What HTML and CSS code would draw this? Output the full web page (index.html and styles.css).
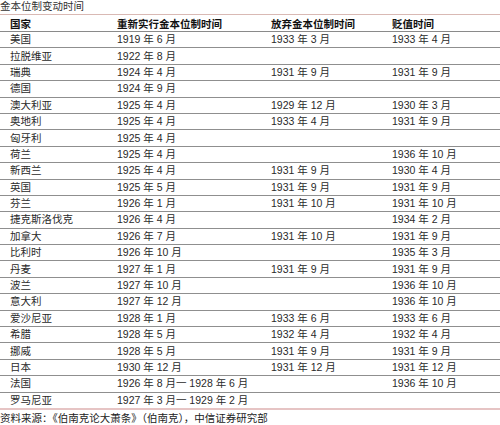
FILE: index.html
```html
<!DOCTYPE html>
<html>
<head>
<meta charset="utf-8">
<link rel="stylesheet" href="styles.css">
</head>
<body>
<div class="title">金本位制变动时间</div>
<table class="gold">
<colgroup><col class="c1"><col class="c2"><col class="c3"><col class="c4"></colgroup>
<thead>
<tr><th>国家</th><th>重新实行金本位制时间</th><th>放弃金本位制时间</th><th>贬值时间</th></tr>
</thead>
<tbody>
<tr><td>美国</td><td>1919 年 6 月</td><td>1933 年 3 月</td><td>1933 年 4 月</td></tr>
<tr><td>拉脱维亚</td><td>1922 年 8 月</td><td></td><td></td></tr>
<tr><td>瑞典</td><td>1924 年 4 月</td><td>1931 年 9 月</td><td>1931 年 9 月</td></tr>
<tr><td>德国</td><td>1924 年 9 月</td><td></td><td></td></tr>
<tr><td>澳大利亚</td><td>1925 年 4 月</td><td>1929 年 12 月</td><td>1930 年 3 月</td></tr>
<tr><td>奥地利</td><td>1925 年 4 月</td><td>1933 年 4 月</td><td>1931 年 9 月</td></tr>
<tr><td>匈牙利</td><td>1925 年 4 月</td><td></td><td></td></tr>
<tr><td>荷兰</td><td>1925 年 4 月</td><td></td><td>1936 年 10 月</td></tr>
<tr><td>新西兰</td><td>1925 年 4 月</td><td>1931 年 9 月</td><td>1930 年 4 月</td></tr>
<tr><td>英国</td><td>1925 年 5 月</td><td>1931 年 9 月</td><td>1931 年 9 月</td></tr>
<tr><td>芬兰</td><td>1926 年 1 月</td><td>1931 年 10 月</td><td>1931 年 10 月</td></tr>
<tr><td>捷克斯洛伐克</td><td>1926 年 4 月</td><td></td><td>1934 年 2 月</td></tr>
<tr><td>加拿大</td><td>1926 年 7 月</td><td>1931 年 10 月</td><td>1931 年 9 月</td></tr>
<tr><td>比利时</td><td>1926 年 10 月</td><td></td><td>1935 年 3 月</td></tr>
<tr><td>丹麦</td><td>1927 年 1 月</td><td>1931 年 9 月</td><td>1931 年 9 月</td></tr>
<tr><td>波兰</td><td>1927 年 10 月</td><td></td><td>1936 年 10 月</td></tr>
<tr><td>意大利</td><td>1927 年 12 月</td><td></td><td>1936 年 10 月</td></tr>
<tr><td>爱沙尼亚</td><td>1928 年 1 月</td><td>1933 年 6 月</td><td>1933 年 6 月</td></tr>
<tr><td>希腊</td><td>1928 年 5 月</td><td>1932 年 4 月</td><td>1932 年 4 月</td></tr>
<tr><td>挪威</td><td>1928 年 5 月</td><td>1931 年 9 月</td><td>1931 年 9 月</td></tr>
<tr><td>日本</td><td>1930 年 12 月</td><td>1931 年 12 月</td><td>1931 年 12 月</td></tr>
<tr><td>法国</td><td>1926 年 8 月一 1928 年 6 月</td><td></td><td>1936 年 10 月</td></tr>
<tr class="last"><td>罗马尼亚</td><td>1927 年 3 月一 1929 年 2 月</td><td></td><td></td></tr>
</tbody>
</table>
<div class="source">资料来源：《伯南克论大萧条》（伯南克），中信证券研究部</div>
</body>
</html>
```

FILE: styles.css
```css
html, body {
  margin: 0;
  padding: 0;
  background: #ffffff;
}
body {
  width: 500px;
  font-family: "Liberation Sans", "Noto Sans CJK SC", sans-serif;
  font-size: 10.5px;
  color: #2a2a2a;
  overflow: hidden;
}
.title {
  height: 14px;
  line-height: 13px;
  color: #333;
  white-space: nowrap;
}
.gold {
  border-collapse: collapse;
  table-layout: fixed;
  width: 500px;
}
.c1 { width: 107px; }
.c2 { width: 154px; }
.c3 { width: 121px; }
.c4 { width: 118px; }
.gold th,
.gold td {
  padding: 0 0 0 10px;
  text-align: left;
  white-space: nowrap;
  overflow: hidden;
}
.gold th {
  height: 16px;
  font-weight: bold;
  color: #111;
  border-top: 1px solid #d9b9b4;
  border-bottom: 1px solid #8a8a8a;
}
.gold td {
  height: 15.4px;
  line-height: 15px;
  border-bottom: 1px solid #8f8f8f;
}
.gold tr.last td {
  border-bottom: 2px solid #e6c4c4;
}
.source {
  height: 14px;
  line-height: 14px;
  margin-top: 1px;
  color: #222;
  white-space: nowrap;
}
```
